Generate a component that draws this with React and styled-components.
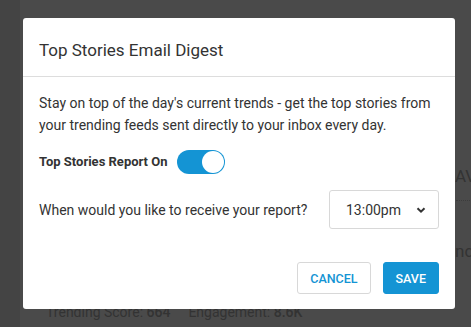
import React, { useState } from 'react'
import styled, { createGlobalStyle } from 'styled-components'

const Global = createGlobalStyle`
  html, body { margin: 0; padding: 0; }
  body {
    font-family: Roboto, "Liberation Sans", sans-serif;
    background: #4a4a4a;
    width: 471px;
    height: 327px;
    overflow: hidden;
  }
`

const Page = styled.div`
  position: relative;
  width: 471px;
  height: 327px;
  background: #4a4a4a;
  display: flex;
  .sidebar {
    width: 20px;
    background: #444;
  }
`

// bits of the page that peek out from behind the overlay
const Behind = styled.div`
  position: absolute;
  color: #333;
  font-size: ${p => p.size || 17}px;
  left: ${p => p.x}px;
  top: ${p => p.y}px;
  white-space: nowrap;
  b { font-weight: 500; }
  .gap { display: inline-block; width: 18px; }
`

const Dots = styled.div`
  position: absolute;
  left: 456px;
  top: 200px;
  width: 20px;
  border-top: 1px dotted #3c3c3c;
`

const Modal = styled.div`
  position: absolute;
  left: 23px;
  top: 18px;
  width: 432px;
  background: #fff;
  border-radius: 3px;
  color: #333;
`

const Header = styled.div`
  padding: 22px 16px 16px;
  border-bottom: 1px solid #ddd;
  h2 {
    margin: 0;
    font-size: 17px;
    line-height: 20px;
    font-weight: 400;
    color: #333;
  }
`

const Body = styled.div`
  padding: 15px 16px 0;
  font-size: 14px;
  line-height: 22px;
  p { margin: 0; }
`

const ToggleRow = styled.div`
  display: flex;
  align-items: center;
  gap: 9px;
  margin-top: 14px;
  font-weight: 700;
  font-size: 13px;
`

const Switch = styled.button`
  width: 48px;
  height: 24px;
  border-radius: 12px;
  border: none;
  padding: 0;
  background: ${p => (p.on ? '#1494d4' : '#ccc')};
  position: relative;
  cursor: pointer;
  &::after {
    content: '';
    position: absolute;
    top: 1px;
    left: ${p => (p.on ? '25px' : '1px')};
    width: 22px;
    height: 22px;
    border-radius: 50%;
    background: #fff;
    transition: left .15s;
  }
`

const TimeRow = styled.div`
  display: flex;
  align-items: center;
  justify-content: space-between;
  margin-top: 16px;
`

const Select = styled.div`
  width: 110px;
  height: 39px;
  box-sizing: border-box;
  border: 1px solid #d8d8d8;
  border-radius: 3px;
  display: flex;
  align-items: center;
  justify-content: space-between;
  padding: 0 11px 0 16px;
  font-size: 14px;
  color: #333;
`

const Footer = styled.div`
  display: flex;
  justify-content: flex-end;
  gap: 12px;
  padding: 33px 16px 15px;
`

const Button = styled.button`
  height: 32px;
  box-sizing: border-box;
  padding: 0 12px;
  border-radius: 3px;
  font-family: inherit;
  font-size: 12.5px;
  font-weight: 500;
  cursor: pointer;
  border: 1px solid ${p => (p.primary ? '#1494d4' : '#d8d8d8')};
  background: ${p => (p.primary ? '#1494d4' : '#fff')};
  color: ${p => (p.primary ? '#fff' : '#1494d4')};
`

function Chevron() {
  return (
    <svg width="12" height="12" viewBox="0 0 12 12">
      <path d="M2.5 4.2 L6 7.7 L9.5 4.2" fill="none" stroke="#333" strokeWidth="2" />
    </svg>
  )
}

export default function App() {
  const [on, setOn] = useState(true)
  return (
    <Page>
      <Global />
      <div className="sidebar" />
      <Behind x={455} y={166}>AV</Behind>
      <Dots />
      <Behind x={455} y={241}>nc</Behind>
      <Behind x={46} y={304} size={14}>
        Trending Score: <b>664</b><span className="gap" />Engagement: <b>8.6K</b>
      </Behind>
      <Modal>
        <Header>
          <h2>Top Stories Email Digest</h2>
        </Header>
        <Body>
          <p>Stay on top of the day's current trends - get the top stories from your trending feeds sent directly to your inbox every day.</p>
          <ToggleRow>
            Top Stories Report On
            <Switch on={on} onClick={() => setOn(!on)} />
          </ToggleRow>
          <TimeRow>
            <span>When would you like to receive your report?</span>
            <Select>
              13:00pm
              <Chevron />
            </Select>
          </TimeRow>
        </Body>
        <Footer>
          <Button>CANCEL</Button>
          <Button primary>SAVE</Button>
        </Footer>
      </Modal>
    </Page>
  )
}
